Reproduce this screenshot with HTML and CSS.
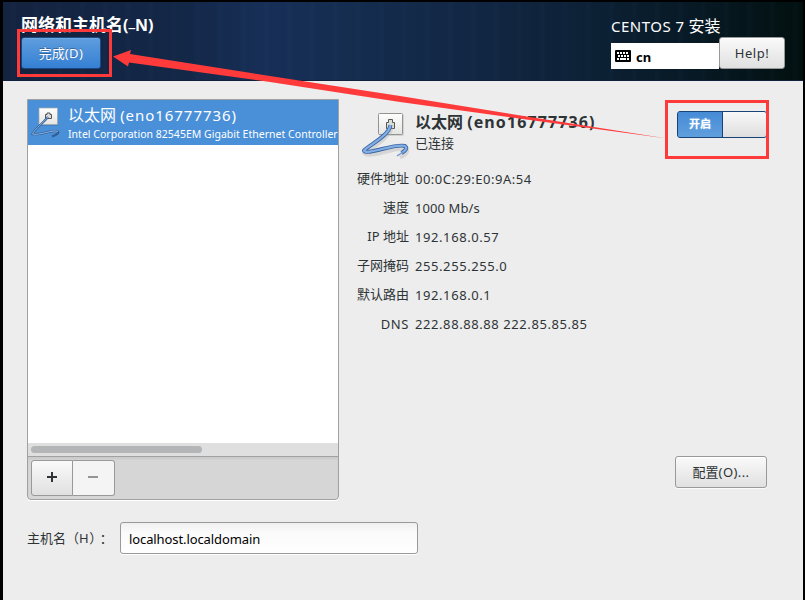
FILE: index.html
```html
<!DOCTYPE html>
<html lang="zh-CN">
<head>
<meta charset="utf-8">
<title>网络和主机名</title>
<link rel="stylesheet" href="styles.css">
</head>
<body>
<svg class="defs" width="0" height="0" aria-hidden="true">
  <defs>
    <linearGradient id="plate" x1="0" y1="0" x2="0" y2="1"><stop offset="0" stop-color="#fff"/><stop offset="1" stop-color="#e4e4e2"/></linearGradient>
  </defs>
</svg>
<div class="window">
  <header class="header">
    <div class="heading">
      <h1 class="title">网络和主机名<span class="title-key">(<span class="dash">_</span>N)</span></h1>
      <button class="button done">完成<span>(D)</span></button>
    </div>
    <div class="product">
      <div class="product-name"><span class="product-latin">CENTOS 7</span> <span>安装</span></div>
      <div class="product-tools">
        <div class="keyboard">
          <svg width="16" height="12" viewBox="0 0 16 12"><rect width="16" height="12" rx="1"/><path d="M2 3h12M3 6h11" stroke="#fff" stroke-width="2" stroke-dasharray="2 1"/><path d="M2 9h2m1 0h6m1 0h2" stroke="#fff" stroke-width="2"/></svg>
          <span>cn</span>
        </div>
        <button class="button help">Help!</button>
      </div>
    </div>
  </header>
  <main class="content">
    <div class="network">
      <section class="devices">
        <div class="device-list">
          <div class="device">
            <svg class="device-icon" width="32" height="32" viewBox="0 0 32 32" fill="none">
              <rect x="8" y="2.500" width="19" height="17" fill="#245386" opacity=".45"/>
              <rect x="8" y="2" width="18.500" height="16.500" rx=".5" fill="url(#plate)" stroke="#a5aaa9" stroke-width=".7"/>
              <path d="M14.500 12.500V8.500h1.500v-1.500h3v1.500h1.500v4z" fill="#ddd" stroke="#555753"/>
              <path d="M17 11C14 15 3 24 1.500 28C7 30 23 23 27 25.500C28.500 27 25 29 21 30.500" stroke="#345f94" stroke-width="2.200"/>
              <path d="M17 11C14 15 3 24 1.500 28C7 30 23 23 27 25.500" stroke="#8db5e6"/>
            </svg>
            <div class="device-text">
              <div class="device-name">以太网 <span>(eno16777736)</span></div>
              <div class="device-vendor">Intel Corporation 82545EM Gigabit Ethernet Controller</div>
            </div>
          </div>
        </div>
        <div class="scrollbar"><div class="thumb"></div></div>
        <div class="toolbar">
          <button class="tool add"><svg width="10" height="10"><path d="M5 0v10M0 5h10" stroke="#2e3436" stroke-width="2"/></svg></button>
          <button class="tool remove"><svg width="10" height="10"><path d="M0 5h10" stroke="#929595" stroke-width="2"/></svg></button>
        </div>
      </section>
      <section class="details">
        <div class="summary">
          <svg class="summary-icon" width="48" height="48" viewBox="0 0 48 48" fill="none">
            <rect x="17" y="3" width="25" height="22" rx="1.500" fill="#999" opacity=".3"/>
            <rect x="16.500" y="2.500" width="24" height="21" rx="1" fill="url(#plate)" stroke="#92948f"/>
            <path d="M24.500 17.500V11.500h2v-3h4v3h2v6z" fill="#ddddda" stroke="#555753"/>
            <path d="M28.500 15C27 25 10 34 2 41C9 46 35 33 43 36.500C46 39 42 43 37 45" stroke="#aaa" stroke-width="4" opacity=".35" transform="translate(1 1.500)"/>
            <path d="M28.500 14C27 25 7 34 2 39.500C4 45 33 32 43 35C46 37.500 43 40 39.500 42" stroke="#3b67a6" stroke-width="4" stroke-linejoin="round"/>
            <path d="M28.500 14C27 25 7 34 2 39.500C4 45 33 32 43 35C46 37.500 43 40 39.500 42" stroke="#83aee4" stroke-width="2.200" stroke-linejoin="round"/>
            <path d="M41 41L35 45" stroke="#6e97cd" stroke-width="1.500"/>
          </svg>
          <div class="summary-text">
            <div class="summary-name">以太网 <span>(eno16777736)</span></div>
            <div class="status">已连接</div>
          </div>
          <div class="switch"><span class="switch-on">开启</span><span class="switch-knob"></span></div>
        </div>
        <dl class="facts">
          <dt>硬件地址</dt><dd class="mac">00:0C:29:E0:9A:54</dd>
          <dt>速度</dt><dd class="speed">1000 Mb/s</dd>
          <dt>IP 地址</dt><dd>192.168.0.57</dd>
          <dt>子网掩码</dt><dd>255.255.255.0</dd>
          <dt>默认路由</dt><dd>192.168.0.1</dd>
          <dt class="dns">DNS</dt><dd>222.88.88.88 222.85.85.85</dd>
        </dl>
        <button class="button configure">配置<span>(O)...</span></button>
      </section>
    </div>
    <div class="hostname">
      <label for="host">主机名（<span>H</span>）<span class="colon">：</span></label>
      <input id="host" type="text" value="localhost.localdomain">
    </div>
  </main>
</div>
<svg class="annotation" width="805" height="600" viewBox="0 0 805 600">
  <path d="M113 56.500L131 50L130 54L270 76L400 96L530 117L667 138.500L530 120L400 102L270 82L129 62.500L128 66.500Z" fill="#fe3a3a"/>
  <path d="M18.500 30.500h92v45h-92zM666.500 101.500h101v56h-101z" fill="none" stroke="#fe3a3a" stroke-width="3"/>
</svg>
</body>
</html>
```
FILE: styles.css
```css
* { box-sizing: border-box; }
body {
  margin: 0;
  height: 600px;
  overflow: hidden;
  background: #000;
  color: #2e3436;
  font: 13px/18px "Noto Sans", "Noto Sans CJK SC", sans-serif;
  padding: 2px 2px 0 3px;
}
svg { display: block; }
.defs { position: absolute; }
button, input { font: inherit; color: #2e3436; margin: 0; }
.window { height: 598px; background: #ededed; display: flex; flex-direction: column; }
.header {
  height: 79px;
  display: flex;
  justify-content: space-between;
  padding: 0 18px;
  color: #fff;
  border-bottom: 1px solid #10203c;
  background:
    repeating-linear-gradient(90deg, transparent 0 7px, rgba(60, 110, 170, .035) 9px 11px, transparent 14px 23px),
    linear-gradient(90deg, #14233f 0, #132747 22%, #172f57 33%, #142c4d 45%, #122744 58%, #0c2034 75%, #06171f 90%, #02100f 100%);
}
.title { margin: 13px 0 2px; height: 20px; font-size: 17px; line-height: 20px; font-weight: 700; white-space: nowrap; }
.title-key { font-size: 16px; }
.dash { display: inline-block; transform: translateY(-4px); }
.button {
  display: flex;
  align-items: center;
  justify-content: center;
  height: 32px;
  padding: 0;
  border: 1px solid #999;
  border-radius: 3px;
  background: linear-gradient(#fafafa, #e0e0e0);
  box-shadow: inset 0 1px #fff, 0 1px rgba(255, 255, 255, .7);
}
.done {
  width: 80px;
  color: #fff;
  border-color: #1b4a83;
  background: linear-gradient(#5f9ddd, #3580d4);
  box-shadow: inset 0 1px #6da7e2;
  text-shadow: 0 -1px rgba(0, 0, 0, .3);
}
.done span { letter-spacing: .4px; }
.product { width: 174px; padding-top: 13px; }
.product-name { height: 22px; font-size: 15px; line-height: 22px; white-space: nowrap; }
.product-name span { font-size: 16px; }
.product-name .product-latin { font-size: 15px; letter-spacing: .5px; }
.product-tools { display: flex; align-items: flex-end; }
.keyboard { width: 108px; height: 26px; padding: 2px 4px 0; display: flex; align-items: center; gap: 5px; background: #fff; color: #000; font-weight: 700; }
.keyboard svg { margin-top: -2px; }
.help { width: 66px; letter-spacing: .5px; box-shadow: inset 0 1px #fff; }
.content { padding: 18px 36px 0 24px; }
.network { display: flex; height: 401px; }
.devices {
  width: 312px;
  display: flex;
  flex-direction: column;
  border: 1px solid #a1a1a1;
  border-radius: 0 0 4px 4px;
  background: #d6d6d6;
  box-shadow: 0 1px #fff;
  overflow: hidden;
}
.device-list { height: 343px; background: #fff; }
.device { height: 45px; display: flex; background: #4a90d9; color: #fff; overflow: hidden; }
.device-icon { margin: 6px 0 0 3px; flex: none; }
.device-text { margin-left: 5px; white-space: nowrap; }
.device-name { height: 24px; padding-top: 4px; font-size: 16px; line-height: 22px; }
.device-name span { font-size: 15px; letter-spacing: .95px; }
.device-vendor { font-size: 10.5px; line-height: 21px; letter-spacing: .02px; }
.scrollbar { height: 13px; padding: 3px; background: #dfdfdf; }
.thumb { width: 171px; height: 7px; border-radius: 4px; background: #b3b5b6; }
.toolbar { flex: 1; display: flex; padding: 3px; border-top: 1px solid #a1a1a1; box-shadow: inset 0 2px 2px #cacaca; }
.tool { width: 42px; height: 36px; padding: 0 0 2px; display: grid; place-items: center; border: 1px solid #999; }
.add { border-radius: 3px 0 0 3px; background: linear-gradient(#fafafa, #e0e0e0); }
.remove { border-left: 0; border-radius: 0 3px 3px 0; background: #f4f4f4; padding-right: 1px; }
.details { flex: 1; padding-left: 17px; display: flex; flex-direction: column; }
.summary { display: flex; height: 67px; padding-top: 12px; }
.summary-icon { margin: 0 0 0 6px; flex: none; }
.summary-text { width: 214px; margin-left: 5px; white-space: nowrap; }
.summary-name { margin-top: -1px; font-size: 16px; line-height: 24px; font-weight: 700; }
.summary-name span { letter-spacing: 1.1px; }
.status { line-height: 19px; }
.switch { width: 90px; height: 27px; margin-left: 48px; display: flex; border: 1px solid #184377; border-radius: 3px; background: #4a90d9; overflow: hidden; }
.switch-on { width: 44px; color: #fff; font-size: 11px; font-weight: 700; line-height: 24px; text-align: center; background: linear-gradient(#468bd6, #609fdd); text-shadow: 0 0 2px #9cc8f4; }
.switch-knob { flex: 1; border-left: 1px solid #184377; background: linear-gradient(#f8f8f8, #dedede); }
.facts { margin: 0; display: grid; grid-template-columns: 53px 1fr; column-gap: 6px; grid-auto-rows: 29px; line-height: 25px; white-space: nowrap; }
.facts dt { text-align: right; }
.facts dd { margin: 0; padding-top: 1px; letter-spacing: .58px; }
.facts .mac { letter-spacing: .5px; }
.facts .speed { letter-spacing: .1px; }
.facts .dns { padding-top: 1px; letter-spacing: .6px; }
.configure { width: 92px; margin: auto 0 12px auto; }
.configure span { letter-spacing: .4px; }
.hostname { display: flex; align-items: center; margin-top: 22px; }
.hostname label { width: 93px; white-space: nowrap; }
.hostname label span { letter-spacing: .6px; }
.hostname .colon { margin-left: 4px; }
.hostname input {
  width: 298px;
  height: 32px;
  padding: 1px 8px 0;
  color: #000;
  border: 1px solid #999;
  border-radius: 3px;
  background: linear-gradient(#f0f0f0, #fafafa 30%, #fff);
  box-shadow: 0 1px #fff;
  letter-spacing: -.1px;
}
.annotation { position: absolute; top: 0; left: 0; pointer-events: none; }
```
